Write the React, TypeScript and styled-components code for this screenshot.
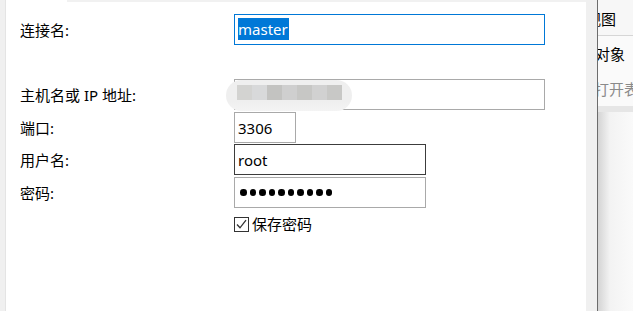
import * as React from 'react';
import styled, { createGlobalStyle } from 'styled-components';

const GlobalStyle = createGlobalStyle`
  html, body {
    margin: 0;
    padding: 0;
    background: #fff;
  }
  * {
    box-sizing: border-box;
  }
`;

const App = () => {
  return (
    <Page>
      <GlobalStyle />
      <LeftEdge />
      <Dialog>
        <TopStrip />
        <Form>
          <Row $gap={12}>
            <Label>连接名:</Label>
            <Field $width={311} $border="#0078d7">
              <Selected>master</Selected>
            </Field>
          </Row>
          <Row $gap={34}>
            <Label>主机名或 IP 地址:</Label>
            <FieldSlot>
              <Field $width={311} $border="#a9a9a9" />
              <Blur>
                {['#d3d3d1', '#d8d9da', '#c3c3c1', '#cfcfcf', '#c7c7c5', '#d1d1d1', '#c8c8c6'].map((c, i) => (
                  <Tile key={i} style={{ background: c }} />
                ))}
              </Blur>
            </FieldSlot>
          </Row>
          <Row $gap={2}>
            <Label>端口:</Label>
            <Field $width={62} $border="#a9a9a9">3306</Field>
          </Row>
          <Row $gap={1}>
            <Label>用户名:</Label>
            <Field $width={192} $border="#3c3c3c">root</Field>
          </Row>
          <Row $gap={2}>
            <Label>密码:</Label>
            <Field $width={192} $border="#a9a9a9">
              <Mask>
                {Array.from({ length: 10 }).map((_, i) => (
                  <Dot key={i} />
                ))}
              </Mask>
            </Field>
          </Row>
          <CheckRow>
            <CheckBox>
              <svg width="13" height="13" viewBox="0 0 13 13">
                <path d="M2 6.5 L5 9.8 L11 2.2" fill="none" stroke="#333" strokeWidth="1.3" />
              </svg>
            </CheckBox>
            <CheckLabel>保存密码</CheckLabel>
          </CheckRow>
        </Form>
      </Dialog>
      <Gutter />
      <BackWindow>
        <BackToolbar>
          <BackText $shift={-12}>视图</BackText>
        </BackToolbar>
        <BackItem $shift={-3}>对象</BackItem>
        <BackItem $shift={-4} $muted>打开表</BackItem>
        <BackBand />
        <BackPane />
      </BackWindow>
    </Page>
  );
};

const Page = styled.div`
  display: flex;
  width: 633px;
  height: 311px;
  overflow: hidden;
  background: #fff;
  font-family: 'Noto Sans', 'Noto Sans CJK SC', sans-serif;
  color: #000;
`;

const LeftEdge = styled.div`
  flex: none;
  width: 6px;
  background: #f0f0f0;
  border-right: 1px solid #e4e4e4;
`;

const Dialog = styled.div`
  flex: none;
  width: 580px;
  display: flex;
  flex-direction: column;
  background: #fff;
`;

const TopStrip = styled.div`
  height: 2px;
  margin-left: 61px;
  background: #f1f1f1;
`;

const Form = styled.div`
  display: flex;
  flex-direction: column;
  padding-left: 14px;
`;

const Row = styled.div<{ $gap: number }>`
  display: flex;
  align-items: center;
  height: 31px;
  margin-top: ${(p) => p.$gap}px;
`;

const Label = styled.div`
  width: 214px;
  flex: none;
  font-size: 15px;
  line-height: 20px;
  white-space: nowrap;
`;

const Field = styled.div<{ $width: number; $border: string }>`
  width: ${(p) => p.$width}px;
  height: 31px;
  flex: none;
  display: flex;
  align-items: center;
  padding: 0 3px;
  border: 1px solid ${(p) => p.$border};
  background: #fff;
  font-size: 15px;
  white-space: nowrap;
`;

const Selected = styled.span`
  display: inline-block;
  background: #0078d7;
  color: #fff;
  line-height: 22px;
  margin-top: -2px;
  padding: 0 1px 0 0;
`;

const FieldSlot = styled.div`
  position: relative;
`;

const Blur = styled.div`
  position: absolute;
  left: -8px;
  top: 1px;
  width: 126px;
  height: 31px;
  border-radius: 16px;
  background: linear-gradient(#efefef, #efefef 70%, #f4f4f4);
  display: flex;
  padding: 5px 0 0 11px;
`;

const Tile = styled.div`
  width: 15px;
  height: 15px;
  flex: none;
`;

const Mask = styled.div`
  display: flex;
  gap: 3px;
  padding-left: 2px;
`;

const Dot = styled.span`
  width: 6.5px;
  height: 6.5px;
  border-radius: 50%;
  background: #000;
`;

const CheckRow = styled.div`
  display: flex;
  align-items: center;
  margin-top: 7px;
  padding-left: 214px;
`;

const CheckBox = styled.div`
  width: 15px;
  height: 15px;
  border: 1px solid #333;
  display: flex;
  align-items: center;
  justify-content: center;
  background: #fff;
`;

const CheckLabel = styled.span`
  margin-left: 3px;
  font-size: 15px;
  line-height: 18px;
`;

const Gutter = styled.div`
  flex: none;
  width: 12px;
  background: #f0f0f0;
  border-right: 1px solid #6c6c6c;
`;

const BackWindow = styled.div`
  flex: none;
  width: 35px;
  display: flex;
  flex-direction: column;
  overflow: hidden;
  background: #fafafa;
`;

const BackToolbar = styled.div`
  height: 36px;
  flex: none;
  padding-top: 9px;
  border-bottom: 1px solid #d6d6d6;
  background: #f7f7f7;
`;

const BackText = styled.div<{ $shift: number }>`
  margin-left: ${(p) => p.$shift}px;
  font-size: 15px;
  line-height: 20px;
  white-space: nowrap;
`;

const BackItem = styled.div<{ $shift: number; $muted?: boolean }>`
  flex: none;
  height: 35px;
  display: flex;
  align-items: center;
  margin-left: ${(p) => p.$shift}px;
  font-size: 15px;
  white-space: nowrap;
  color: ${(p) => (p.$muted ? '#8a8a8a' : '#000')};
`;

const BackBand = styled.div`
  flex: none;
  height: 6px;
  background: #e6e6e6;
`;

const BackPane = styled.div`
  flex: 1;
  background: linear-gradient(to right, #d4d4d4, #f3f3f3 12px, #fafafa);
`;

export default App;
